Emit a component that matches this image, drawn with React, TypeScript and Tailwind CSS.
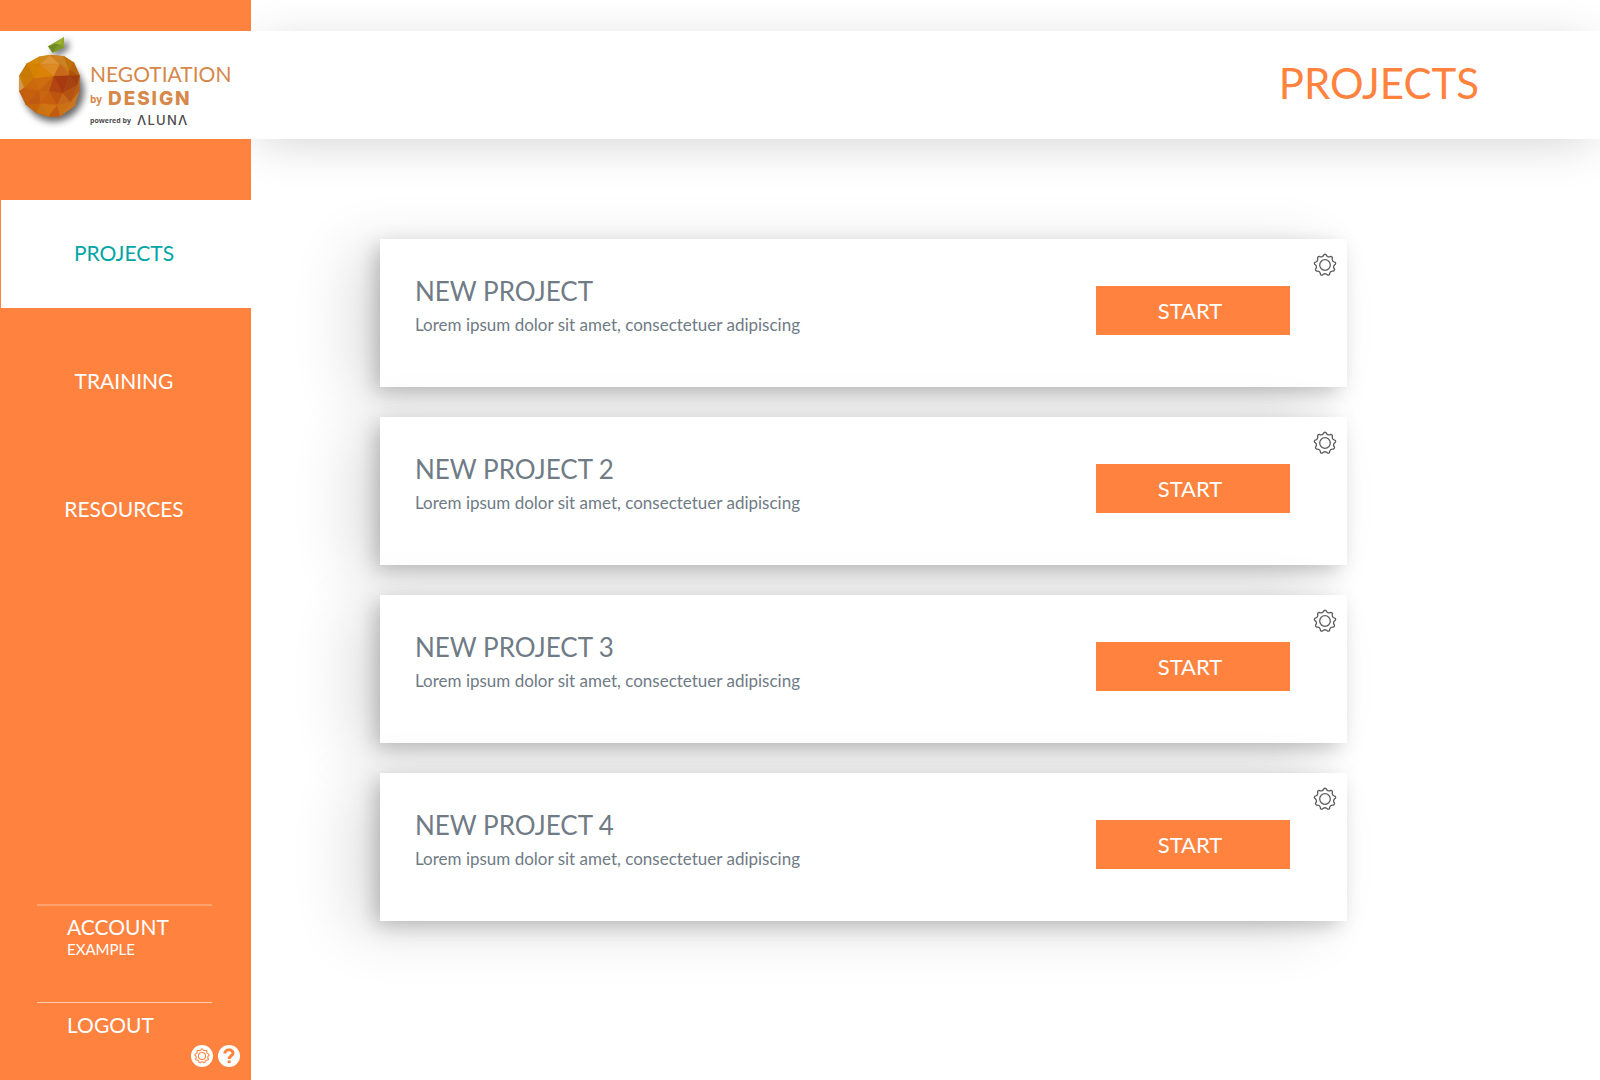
import { FC } from 'react';

interface IProject {
  id: number;
  title: string;
  description: string;
}

const description = 'Lorem ipsum dolor sit amet, consectetuer adipiscing';

const projects: IProject[] = [
  { id: 1, title: 'NEW PROJECT', description },
  { id: 2, title: 'NEW PROJECT 2', description },
  { id: 3, title: 'NEW PROJECT 3', description },
  { id: 4, title: 'NEW PROJECT 4', description },
];

const navItems = ['PROJECTS', 'TRAINING', 'RESOURCES'];

// [points, fill]
const facets: [string, string][] = [
  ['88,80 120,75 90,103', '#d08a1c'],
  ['120,75 90,103 150,103', '#dc9436'],
  ['120,75 162,79 150,103', '#cf8220'],
  ['162,79 150,103 178,121', '#c98325'],
  ['162,79 192,98 178,121', '#c07008'],
  ['88,80 50,101 90,103', '#d58905'],
  ['50,101 90,103 72,146', '#d58200'],
  ['50,101 28,137 72,146', '#c97a05'],
  ['90,103 72,146 132,139', '#d98206'],
  ['90,103 150,103 132,139', '#dd8a22'],
  ['150,103 132,139 178,137', '#c8681a'],
  ['150,103 178,121 178,137', '#cb741a'],
  ['192,98 178,121 209,137', '#b9640c'],
  ['178,121 209,137 178,137', '#b0520f'],
  ['28,137 72,146 42,174', '#cb7a08'],
  ['28,137 42,174 28,184', '#d29a50'],
  ['72,146 42,174 88,183', '#c9690c'],
  ['72,146 132,139 88,183', '#cc6d10'],
  ['132,139 88,183 118,184', '#c5620f'],
  ['132,139 118,184 158,190', '#b24512'],
  ['132,139 178,137 158,190', '#a83a10'],
  ['178,137 209,137 202,166', '#9f3e10'],
  ['178,137 202,166 158,190', '#a64413'],
  ['209,137 202,166 208,183', '#b66428'],
  ['28,184 42,174 48,224', '#c25e10'],
  ['42,174 88,183 48,224', '#c6600e'],
  ['88,183 48,224 92,221', '#bf5a10'],
  ['88,183 118,184 92,221', '#c96614'],
  ['118,184 92,221 142,225', '#c86010'],
  ['118,184 158,190 142,225', '#bd5510'],
  ['158,190 142,225 183,216', '#c4661c'],
  ['158,190 202,166 183,216', '#b55412'],
  ['202,166 208,183 183,216', '#ba5b16'],
  ['208,183 194,228 183,216', '#c77526'],
  ['48,224 92,221 80,249', '#c4650c'],
  ['92,221 80,249 116,260', '#cb7210'],
  ['92,221 142,225 116,260', '#d07412'],
  ['142,225 116,260 150,259', '#be5c12'],
  ['142,225 183,216 150,259', '#cd7014'],
  ['183,216 194,228 150,259', '#cc7420'],
];

const Fruit: FC = () => (
  <svg viewBox="0 3 240 312" className="h-[104px] w-20 shrink-0 overflow-visible" aria-hidden="true">
    <defs>
      <filter id="soft" x="-30%" y="-30%" width="170%" height="170%">
        <feGaussianBlur stdDeviation="11" />
      </filter>
    </defs>
    <g filter="url(#soft)" fill="#000" opacity="0.6">
      <circle cx="131" cy="184" r="91" />
      <path d="M124 58 174 30 176 58 136 80z" />
    </g>
    <path
      d="M88 80 120 75 162 79 192 98 209 137 208 183 194 228 150 259 116 260 80 249 48 224 28 184 28 137 50 101z"
      fill="#c6680f"
    />
    {facets.map(([points, fill]) => (
      <polygon key={points} points={points} fill={fill} stroke={fill} strokeWidth="1" />
    ))}
    <path d="M114 49 162 21 162 52 128 68z" fill="#93a62b" />
    <path d="M114 49 136 41 152 44 128 68z" fill="#6f8a24" />
    <path d="M136 41 162 21 152 44z" fill="#a0b236" />
    <path d="M152 44 162 52 128 68 140 48z" fill="#7d9a28" />
  </svg>
);

// outline of a nine-toothed cog, centred in a 24 unit box
const cogPath = Array.from({ length: 9 }, (_, i) => {
  const point = (radius: number, degrees: number) => {
    const angle = ((i * 40 + degrees - 90) * Math.PI) / 180;
    return `${(12 + radius * Math.cos(angle)).toFixed(2)} ${(12 + radius * Math.sin(angle)).toFixed(2)}`;
  };
  return `${i === 0 ? 'M' : 'L'}${point(9.4, -10)}L${point(10.4, -6)}Q${point(11.2, 0)} ${point(10.4, 6)}L${point(9.4, 10)}Q${point(8.2, 20)} ${point(9.4, 30)}`;
}).join('');

const Cog: FC<{ className: string; strokeWidth?: number }> = ({ className, strokeWidth = 1.3 }) => (
  <svg viewBox="0 0 24 24" className={className} fill="none" stroke="currentColor" strokeWidth={strokeWidth} strokeLinejoin="round" aria-hidden="true">
    <path d={cogPath + 'Z'} />
    <circle cx="12" cy="12" r="5.3" />
  </svg>
);

const Logo: FC = () => (
  <a href="#" className="flex h-27 items-start bg-white pl-[10px]">
    <Fruit />
    <div className="relative pt-[30px] whitespace-nowrap text-[#d6884a]">
      <div className="text-[21px] leading-[26px]">NEGOTIATION</div>
      <div className="flex h-6 items-center gap-[6px]">
        <span className="font-[Open_Sans] text-[10px] font-bold">by</span>
        <span className="font-[Inter] text-[19px] leading-6 font-extrabold tracking-widest">DESIGN</span>
      </div>
      <div className="flex h-5 items-center gap-[6px] text-[#4c4c4c]">
        <span className="font-[Open_Sans] text-[7px] font-bold">powered by</span>
        <span className="font-[Inter] text-[13px] font-medium tracking-widest">ΛLUNΛ</span>
      </div>
    </div>
  </a>
);

const Sidebar: FC = () => (
  <aside className="relative z-10 flex w-[251px] shrink-0 flex-col bg-[#ff833f] pt-[31px] text-[21px] text-white">
    <Logo />
    <nav className="mt-[61px] flex flex-col gap-5 pl-px">
      {navItems.map((item, index) => (
        <a
          key={item}
          href="#"
          aria-current={index === 0 ? 'page' : undefined}
          className={`flex h-27 items-center justify-center pr-1 pb-[3px] ${index === 0 ? 'bg-white text-[#00a5a5]' : ''}`}
        >
          {item}
        </a>
      ))}
    </nav>

    <div className="mt-auto mr-[39px] ml-[37px]">
      <a href="#" className="block h-[98px] border-t-2 border-white/25 pt-[7px] pl-[30px]">
        <span className="block leading-7">ACCOUNT</span>
        <span className="block text-[15px] leading-4">EXAMPLE</span>
      </a>
      <a href="#" className="block border-t border-white/60 pt-2 pl-[30px] leading-7">
        LOGOUT
      </a>
    </div>
    <div className="mt-[6px] mr-[11px] mb-[13px] flex justify-end gap-[5px]">
      <button aria-label="Settings" className="flex size-[22px] items-center justify-center rounded-full bg-white text-[#ff833f]">
        <Cog className="size-4" strokeWidth={1.6} />
      </button>
      <button aria-label="Help" className="flex size-[22px] items-center justify-center rounded-full bg-white text-[#ff833f]">
        <svg viewBox="0 0 22 22" className="size-[22px]" fill="none" stroke="currentColor" strokeWidth="3" aria-hidden="true">
          <path d="M6.8 8.6C6.8 3.6 15 3.8 15 8.2 15 11 11.2 10.6 11.2 14" />
          <path d="M11.2 15.4V18.2" />
        </svg>
      </button>
    </div>
  </aside>
);

const ProjectCard: FC<{ project: IProject }> = ({ project }) => (
  <article className="flex h-[148px] items-start bg-white pt-[14px] pr-[10px] pl-[35px] shadow-[-6px_6px_20px_-2px_rgba(0,0,0,0.24),-30px_10px_60px_0px_rgba(0,0,0,0.12)]">
    <div className="grow pt-5 text-[#6f7b85]">
      <h2 className="text-[26px] leading-9">{project.title}</h2>
      <p className="text-[17px] leading-8">{project.description}</p>
    </div>
    <button className="mt-[33px] mr-[23px] h-[49px] w-[194px] bg-[#ff833f] pr-[6px] text-[22px] text-white">START</button>
    <button aria-label={`${project.title} settings`} className="text-[#5c5c5c]">
      <Cog className="size-6" />
    </button>
  </article>
);

const App: FC = () => (
  <div className="flex min-h-screen bg-white font-[Lato,sans-serif]">
    <Sidebar />
    <div className="min-w-0 grow overflow-hidden pt-[31px]">
      <header className="flex h-27 items-center justify-end bg-white pr-[121px] pb-1 shadow-[0_8px_50px_-8px_rgba(0,0,0,0.2)]">
        <h1 className="text-[42px] text-[#ff833f]">PROJECTS</h1>
      </header>
      <main className="mt-[100px] mr-[253px] ml-[129px] flex flex-col gap-[30px]">
        {projects.map((project) => (
          <ProjectCard key={project.id} project={project} />
        ))}
      </main>
    </div>
  </div>
);

export default App;
